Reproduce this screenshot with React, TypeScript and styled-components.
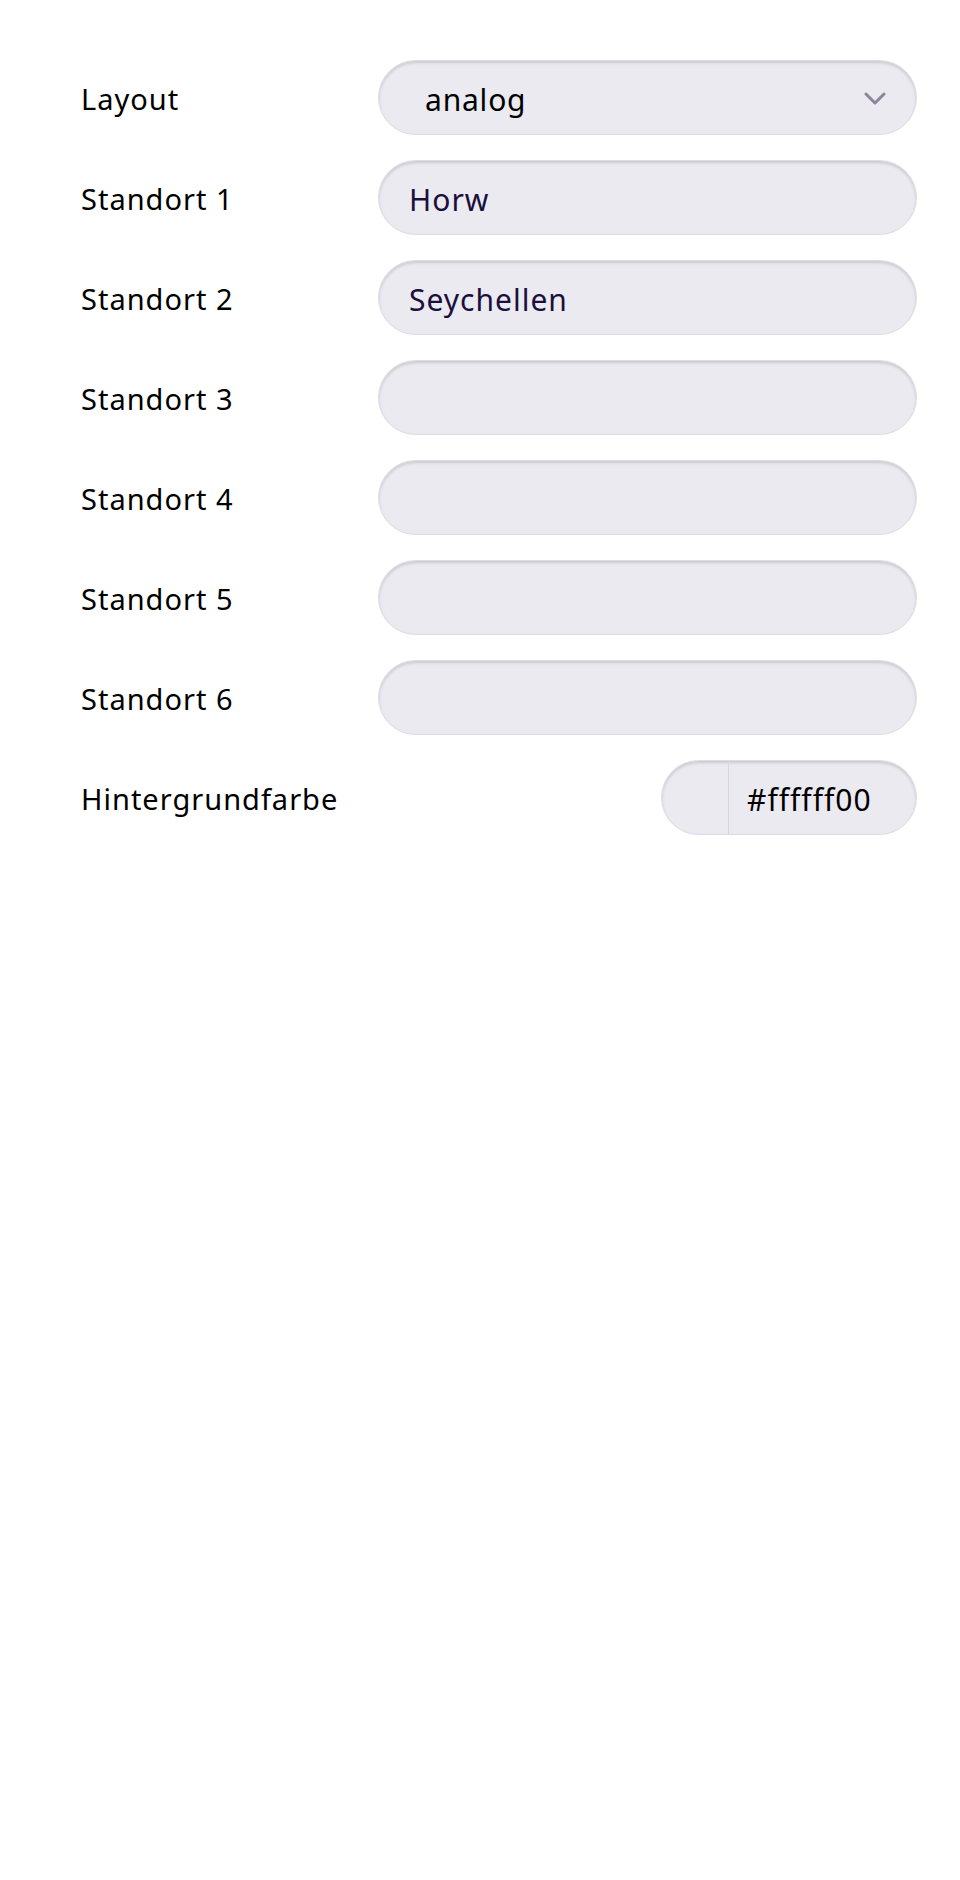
import React from "react";
import styled, { createGlobalStyle } from "styled-components";

const GlobalStyle = createGlobalStyle`
  html, body {
    margin: 0;
    padding: 0;
    background: #ffffff;
  }
  body {
    font-family: "Noto Sans", "Open Sans", sans-serif;
  }
`;

const Form = styled.form`
  display: flex;
  flex-direction: column;
  gap: 25px;
  padding: 60px 43px 0 81px;
  width: 960px;
  box-sizing: border-box;
`;

const Row = styled.div`
  display: grid;
  grid-template-columns: 297px 1fr;
  align-items: center;
  height: 75px;
`;

const Label = styled.label`
  padding-top: 2px;
  font-size: 29px;
  color: #000000;
  letter-spacing: 1px;
`;

const fieldSkin = `
  height: 75px;
  box-sizing: border-box;
  border-radius: 38px;
  background: #eaeaf0;
  border: 1px solid #dcdce4;
  box-shadow: inset 0 2px 3px rgba(0, 0, 0, 0.14);
`;

const SelectBox = styled.div`
  ${fieldSkin}
  display: flex;
  align-items: center;
  padding: 3px 30px 0 46px;
  font-size: 30px;
  letter-spacing: 0.8px;
  color: #000000;
`;

const Chevron = styled.svg`
  margin-left: auto;
  width: 22px;
  height: 14px;
`;

const TextInput = styled.input<{ $ink?: string }>`
  ${fieldSkin}
  width: 100%;
  padding: 3px 30px 0;
  font-family: inherit;
  font-size: 30px;
  letter-spacing: 1px;
  color: ${(p) => p.$ink ?? "#1b0f3d"};
  outline: none;
`;

const ColorField = styled.div`
  ${fieldSkin}
  justify-self: end;
  display: flex;
  width: 256px;
  overflow: hidden;
`;

const Swatch = styled.div<{ $color: string }>`
  width: 66px;
  flex: none;
  background: ${(p) => p.$color};
  border-right: 1px solid #d6d6de;
`;

const HexText = styled.span`
  flex: 1;
  display: flex;
  align-items: center;
  padding: 3px 0 0 18px;
  font-size: 30px;
  letter-spacing: 1px;
  color: #000000;
`;

const places = ["Horw", "Seychellen", "", "", "", ""];

export default function App() {
  return (
    <>
      <GlobalStyle />
      <Form>
        <Row>
          <Label>Layout</Label>
          <SelectBox>
            analog
            <Chevron viewBox="0 0 22 14">
              <path
                d="M2 2 L11 11 L20 2"
                fill="none"
                stroke="#8b859d"
                strokeWidth="3"
                strokeLinecap="round"
                strokeLinejoin="round"
              />
            </Chevron>
          </SelectBox>
        </Row>
        {places.map((p, i) => (
          <Row key={i}>
            <Label>Standort {i + 1}</Label>
            <TextInput defaultValue={p} />
          </Row>
        ))}
        <Row>
          <Label>Hintergrundfarbe</Label>
          <ColorField>
            <Swatch $color="transparent" />
            <HexText>#ffffff00</HexText>
          </ColorField>
        </Row>
      </Form>
    </>
  );
}
